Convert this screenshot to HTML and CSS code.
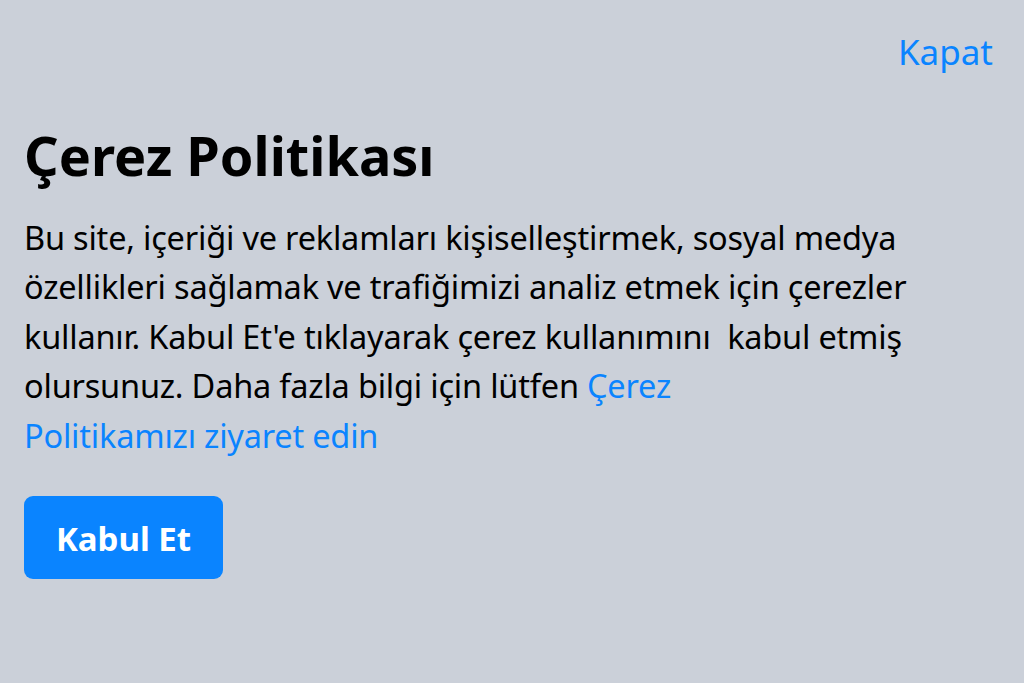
FILE: index.html
```html
<!DOCTYPE html>
<html lang="tr">
<head>
<meta charset="utf-8">
<title>Çerez Politikası</title>
<link rel="stylesheet" href="styles.css">
</head>
<body>
<div class="page">
  <div class="topbar">
    <a class="close" href="#">Kapat</a>
  </div>
  <h1 class="title">Çerez Politikası</h1>
  <p class="text">Bu site, içeriği ve reklamları kişiselleştirmek, sosyal medya özellikleri sağlamak ve trafiğimizi analiz etmek için çerezler kullanır. Kabul Et'e tıklayarak çerez kullanımını&nbsp; kabul etmiş olursunuz. Daha fazla bilgi için lütfen <a class="link" href="#">Çerez</a><br><a class="link" href="#">Politikamızı ziyaret edin</a></p>
  <button class="accept" type="button">Kabul Et</button>
</div>
</body>
</html>
```
FILE: styles.css
```css
html, body {
  margin: 0;
  padding: 0;
}
body {
  background: #cbd0d9;
  font-family: "Noto Sans", "Open Sans", sans-serif;
  color: #000;
  height: 683px;
  overflow: hidden;
}
.page {
  padding: 27px 31px 0 24px;
}
.topbar {
  display: flex;
  justify-content: flex-end;
}
.close {
  color: #0a84ff;
  text-decoration: none;
  font-size: 35px;
  line-height: 49.5px;
}
.title {
  margin: 47px 0 0 0;
  font-size: 54px;
  line-height: 62px;
  font-weight: 700;
}
.text {
  margin: 27px 0 0 0;
  font-size: 32.5px;
  letter-spacing: -0.2px;
  line-height: 49.5px;
}
.link {
  color: #0a84ff;
  text-decoration: none;
}
.accept {
  margin-top: 36px;
  width: 199px;
  height: 83px;
  border: none;
  border-radius: 9px;
  background: #0a84ff;
  color: #fff;
  font-family: "Noto Sans", "Open Sans", sans-serif;
  font-size: 33px;
  font-weight: 700;
  display: flex;
  align-items: center;
  justify-content: center;
  padding: 2px 0 0 0;
}
```
